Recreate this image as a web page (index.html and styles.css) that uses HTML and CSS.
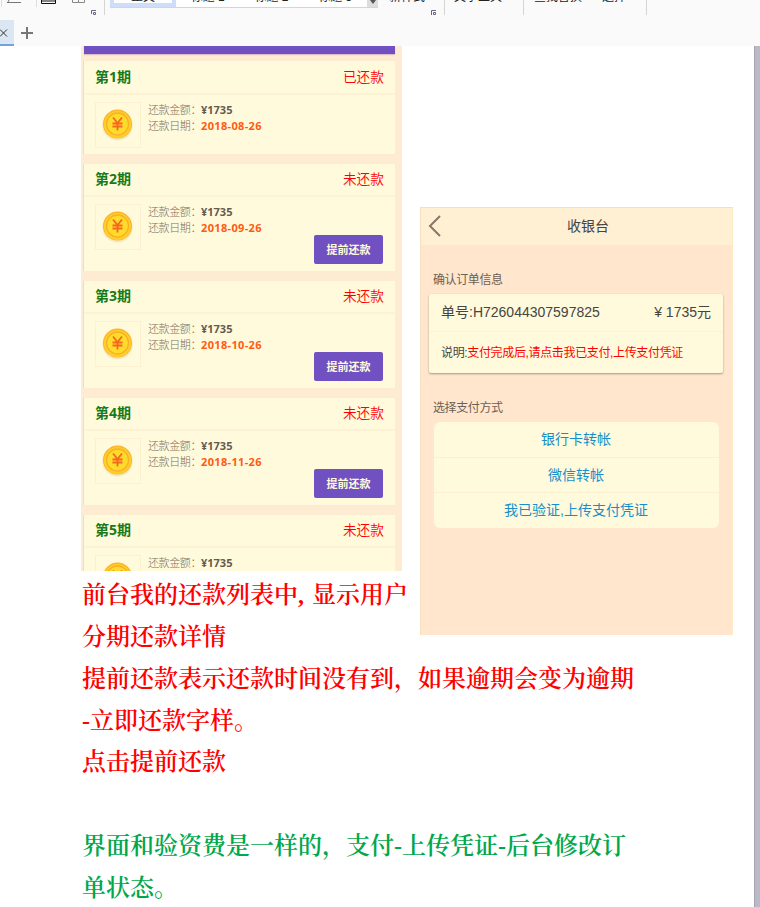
FILE: index.html
```
<!DOCTYPE html>
<html lang="zh-CN">
<head>
    <meta charset="UTF-8">
    <title>还款列表</title>
    <link rel="stylesheet" href="styles.css">
</head>
<body>
    <svg class="defs" width="0" height="0">
        <symbol id="coin" viewBox="0 0 33 33">
            <circle cx="16.500" cy="17.500" r="15" fill="#f3e8c0"/>
            <circle cx="16.500" cy="16" r="14.500" fill="#fdb42b"/>
            <circle cx="16.500" cy="16.500" r="13.500" fill="#ffcf2a"/>
            <circle cx="16.500" cy="16" r="11" fill="#ffdb2c" stroke="#fbb024" stroke-width="1.300"/>
            <path d="M12 9.500L16.500 15L21 9.500M11.500 15.500H21.500M11.500 18.500H21.500M16.500 15V22.500" fill="none" stroke="#f5661f" stroke-width="1.800"/>
        </symbol>
    </svg>
    <div class="toolbar">
        <div class="ribbon">
            <div class="group group-format">
                <svg width="104" height="16" viewBox="0 0 104 16" fill="none">
                    <path d="M1.5 0V7M36.5 0V7" stroke="#ddd"/>
                    <path d="M7 2.5H21M9 0L8 2" stroke="#777"/>
                    <path d="M41.5 0V3.5H55.5V0M41 1H56" stroke="#111"/>
                    <path d="M72.5 0V2.5H84.5V0M78.5 0V2" stroke="#888"/>
                    <path d="M91.500 14V10.500H96M93.500 14.500H95.500V12.500H93.500Z" stroke="#668"/>
                </svg>
            </div>
            <div class="group group-styles">
                <div class="gallery">
                    <div class="style active"><span>正文</span></div>
                    <div class="style"><span>标题 1</span></div>
                    <div class="style"><span>标题 2</span></div>
                    <div class="style"><span>标题 3</span></div>
                    <div class="more"><svg width="11" height="6" viewBox="0 0 11 6"><path d="M3 0H9L6 4Z" fill="#555"/></svg></div>
                </div>
                <span class="cmd cmd-new">新样式</span>
                <svg class="launcher" width="6" height="6" viewBox="0 0 6 6" fill="none"><path d="M.5 5V.5H5M2.500 4.500H4.500V2.500H2.500Z" stroke="#668"/></svg>
            </div>
            <div class="group group-tools"><span class="cmd">文字工具</span></div>
            <div class="group group-find"><span class="cmd">查找替换</span><span class="cmd">选择</span></div>
        </div>
        <div class="tabs">
            <div class="tab"><svg width="8" height="8" viewBox="0 0 8 8"><path d="M0 .5L7 7.500M7 .5L0 7.500" stroke="#333"/></svg></div>
            <svg class="add" width="12" height="12" viewBox="0 0 12 12"><path d="M0 6H12M6 0V12" stroke="#777" stroke-width="2"/></svg>
        </div>
    </div>

    <div class="document">
        <div class="page">
            <div class="columns">
                <div class="left">
                    <div class="repay">
                        <div class="repay-bar"></div>
                        <div class="card paid">
                            <div class="card-head"><b>第1期</b><span>已还款</span></div>
                            <div class="card-body">
                                <div class="coin"><svg width="33" height="33"><use href="#coin"/></svg></div>
                                <div class="info"><div>还款金额：<b>¥1735</b></div><div>还款日期：<b class="date">2018-08-26</b></div></div>
                            </div>
                        </div>
                        <div class="card">
                            <div class="card-head"><b>第2期</b><span>未还款</span></div>
                            <div class="card-body">
                                <div class="coin"><svg width="33" height="33"><use href="#coin"/></svg></div>
                                <div class="info"><div>还款金额：<b>¥1735</b></div><div>还款日期：<b class="date">2018-09-26</b></div></div>
                                <button class="btn">提前还款</button>
                            </div>
                        </div>
                        <div class="card">
                            <div class="card-head"><b>第3期</b><span>未还款</span></div>
                            <div class="card-body">
                                <div class="coin"><svg width="33" height="33"><use href="#coin"/></svg></div>
                                <div class="info"><div>还款金额：<b>¥1735</b></div><div>还款日期：<b class="date">2018-10-26</b></div></div>
                                <button class="btn">提前还款</button>
                            </div>
                        </div>
                        <div class="card">
                            <div class="card-head"><b>第4期</b><span>未还款</span></div>
                            <div class="card-body">
                                <div class="coin"><svg width="33" height="33"><use href="#coin"/></svg></div>
                                <div class="info"><div>还款金额：<b>¥1735</b></div><div>还款日期：<b class="date">2018-11-26</b></div></div>
                                <button class="btn">提前还款</button>
                            </div>
                        </div>
                        <div class="card">
                            <div class="card-head"><b>第5期</b><span>未还款</span></div>
                            <div class="card-body">
                                <div class="coin"><svg width="33" height="33"><use href="#coin"/></svg></div>
                                <div class="info"><div>还款金额：<b>¥1735</b></div></div>
                            </div>
                        </div>
                    </div>
                    <div class="note">前台我的还款列表中<span class="comma">,</span>显示用户<br>分期还款详情</div>
                </div>

                <div class="cashier">
                    <div class="cashier-head">
                        <svg width="14" height="22" viewBox="0 0 14 22"><path d="M12 1L2 11L12 21" fill="none" stroke="#85776a" stroke-width="2"/></svg>
                        <span>收银台</span>
                    </div>
                    <div class="label">确认订单信息</div>
                    <div class="order">
                        <div class="order-row"><span>单号:H726044307597825</span><span>¥ 1735元</span></div>
                        <div class="order-desc">说明:<span>支付完成后,请点击我已支付,上传支付凭证</span></div>
                    </div>
                    <div class="label">选择支付方式</div>
                    <div class="methods">
                        <div>银行卡转帐</div>
                        <div>微信转帐</div>
                        <div>我已验证,上传支付凭证</div>
                    </div>
                </div>
            </div>
            <div class="note">提前还款表示还款时间没有到，如果逾期会变为逾期<br>-立即还款字样。<br>点击提前还款</div>
            <div class="note green">界面和验资费是一样的，支付-上传凭证-后台修改订<br>单状态。</div>
        </div>
        <div class="page-edge"></div>
    </div>
</body>
</html>
```
FILE: styles.css
```
* {
    box-sizing: border-box;
}
body {
    margin: 0;
    height: 907px;
    overflow: hidden;
    background: #fff;
    font-family: "Liberation Sans", "Noto Sans CJK SC", sans-serif;
}
svg {
    display: block;
}
.defs {
    display: none;
}

/* toolbar */
.toolbar {
    height: 46px;
    background: #fafafa;
}
.ribbon {
    display: flex;
    height: 20px;
    overflow: hidden;
    font-size: 12px;
    color: #222;
}
.group {
    display: flex;
    height: 15px;
    border-right: 1px solid #d5d5d5;
}
.group-format {
    width: 105px;
}
.group-styles {
    width: 340px;
    padding-left: 5px;
}
.group-tools {
    width: 79px;
    padding-left: 9px;
}
.group-find {
    width: 123px;
    padding-left: 10px;
    gap: 20px;
}
.gallery {
    display: flex;
    width: 268px;
    height: 8px;
    background: #fff;
    border-bottom: 1px solid #d5d5d5;
}
.style {
    width: 64px;
    text-align: center;
}
.style.active {
    width: 66px;
    height: 7px;
    border: 4px solid #cfddf8;
    border-top: none;
}
.style span, .cmd {
    display: block;
    height: 16px;
    line-height: 16px;
    margin-top: -11px;
    white-space: nowrap;
}
.more {
    flex: 1;
    background: #ddd;
}
.cmd-new {
    margin-left: 11px;
}
.launcher {
    margin: 10px 0 0 6px;
    flex: none;
}
.tabs {
    display: flex;
    height: 26px;
}
.tab {
    width: 14px;
    padding-top: 9px;
    background: #dbe6f3;
    border-bottom: 2px solid #75a1dc;
}
.add {
    margin: 7px 0 0 7px;
}

/* document */
.document {
    display: flex;
    height: 861px;
}
.page {
    width: 754px;
    padding-left: 81px;
}
.page-edge {
    flex: 1;
    background: #b9b9c8;
    border-left: 1px solid #a3a3b3;
}
.columns {
    display: flex;
    height: 613px;
}
.left {
    width: 339px;
}
.note {
    padding-left: 1px;
    font-family: "Liberation Serif", "Noto Serif CJK SC", "Noto Sans CJK SC", serif;
    font-size: 24px;
    font-weight: 600;
    line-height: 41.7px;
    color: #f00;
    white-space: nowrap;
}
.left .note {
    padding-top: 4px;
}
.comma {
    display: inline-block;
    width: 14px;
}
.green {
    margin-top: 41.7px;
    color: #00a84c;
}

/* repayment list */
.repay {
    width: 321px;
    height: 525px;
    padding: 0 7px 0 2px;
    overflow: hidden;
    background: #fdecd2;
}
.repay-bar {
    height: 8px;
    margin: 0 0 7px 1px;
    background: #7151c2;
    box-shadow: 0 1px 1px #d9c0c4;
}
.card {
    height: 107px;
    margin-bottom: 10px;
    background: #fffadb;
    border-left: 1px solid #f3dcba;
}
.card.paid {
    height: 93px;
}
.card-head {
    display: flex;
    justify-content: space-between;
    height: 33px;
    padding: 0 11px;
    border-bottom: 2px solid #fdf2d4;
    line-height: 30px;
    font-size: 14px;
    font-family: "Open Sans", "Noto Sans CJK SC", sans-serif;
    color: #187a18;
}
.paid .card-head {
    height: 34px;
    line-height: 32px;
}
.card-head span {
    font-size: 13.7px;
    color: #f00;
    font-weight: 350;
}
.card-body {
    position: relative;
    display: flex;
    padding: 7px 11px;
}
.coin {
    width: 46px;
    height: 46px;
    padding: 5px;
    border: 1px solid #fdf0d0;
}
.info {
    margin-left: 7px;
    font-family: "Open Sans", "Noto Sans CJK SC", sans-serif;
    font-size: 11px;
    font-weight: 300;
    line-height: 16px;
    letter-spacing: -0.4px;
    color: #80705f;
}
.info b {
    font-weight: 700;
    letter-spacing: 0;
    color: #665a50;
}
.info b.date {
    letter-spacing: 0.35px;
    color: #ff5a12;
}
.btn {
    position: absolute;
    right: 12px;
    top: 38px;
    width: 69px;
    height: 29px;
    padding: 0 0 2px;
    border: none;
    border-radius: 2px;
    background: #7151c2;
    color: #fffadb;
    font: bold 11px "Noto Sans CJK SC", sans-serif;
}

/* cashier */
.cashier {
    width: 313px;
    height: 428px;
    margin-top: 161px;
    background: #ffe6cc;
    border: 1px solid #f5dfc0;
    border-bottom: none;
    border-right-color: #ffeac8;
}
.cashier-head {
    display: flex;
    height: 37px;
    padding: 7px 0 0 7px;
    background: #ffefd3;
}
.cashier-head span {
    margin-left: 125px;
    line-height: 23px;
    font-size: 14px;
    color: #444;
}
.label {
    padding: 26px 0 5px 12px;
    line-height: 18px;
    font-size: 12px;
    letter-spacing: -0.4px;
    color: #6c5f55;
}
.order {
    width: 294px;
    height: 79px;
    margin-left: 8px;
    background: #fffadb;
    border-radius: 2px;
    box-shadow: 0 1px 2px rgba(90, 70, 40, 0.5);
}
.order-row {
    display: flex;
    justify-content: space-between;
    height: 38px;
    padding: 0 12px;
    border-bottom: 1px solid #fdf4d3;
    line-height: 37px;
    font-size: 14px;
    color: #444;
}
.order-desc {
    padding-left: 12px;
    line-height: 43px;
    font-size: 12px;
    letter-spacing: -0.35px;
    color: #444;
}
.order-desc span {
    color: #f00;
}
.methods {
    width: 285px;
    height: 106px;
    margin-left: 13px;
    background: #fffadb;
    border-radius: 6px;
    text-align: center;
    font-size: 14px;
    color: #168fcb;
}
.methods div {
    height: 35px;
    padding-right: 1px;
    line-height: 35px;
}
.methods div + div {
    border-top: 1px solid #faf0d0;
}
```
